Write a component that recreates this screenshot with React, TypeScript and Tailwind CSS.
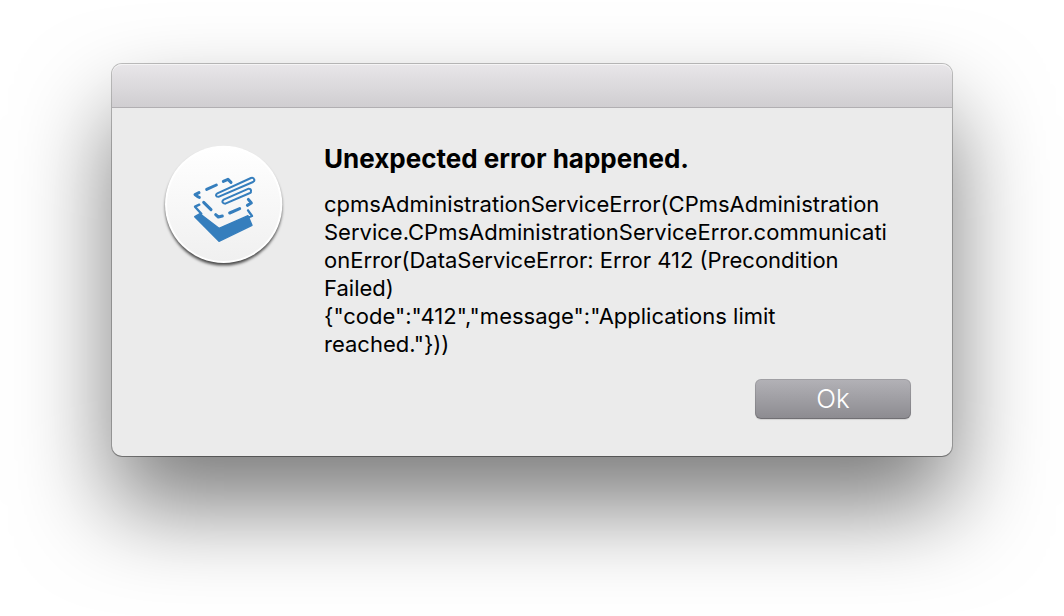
function AppIcon() {
  return (
    <svg viewBox="27 27 360 360" className="size-30 shrink-0 overflow-visible" role="img" aria-label="Application icon">
      <defs>
        <linearGradient id="disc" x1="0" y1="0" x2="0" y2="1">
          <stop offset="0" stopColor="#ffffff" />
          <stop offset="1" stopColor="#f0f0f0" />
        </linearGradient>
        <filter id="soft" x="-10%" y="-10%" width="120%" height="125%">
          <feGaussianBlur stdDeviation="5" />
        </filter>
      </defs>
      <circle cx="206" cy="213" r="175" fill="#000" fillOpacity="0.7" filter="url(#soft)" />
      <circle cx="206" cy="205" r="176" fill="#fff" />
      <circle cx="206" cy="205" r="170" fill="url(#disc)" />
      <g stroke="#357ebd" strokeLinecap="round" strokeLinejoin="round" fill="none">
        <path d="M119 242L135 233L192 277L279 239L291 268L192 316Z" fill="#357ebd" strokeWidth="4" />
        <path d="M133 206L120 212L139 233M279 223L291 240L275 246" strokeWidth="7" />
        <path d="M133 184L128 182L120 176L132 170M155 160L184 147M205 136L219 130L228 139M146 199L168 221M182 236L190 243L202 240M224 231L254 218M277 208L289 201L280 190" strokeWidth="9" />
        <path d="M187 172L288 126Q296 124 298 131Q299 135 294 138L192 182Q184 183 183 178Q183 174 187 172ZM206 191L281 158Q288 158 288 164Q289 169 285 171L211 203Q204 203 202 198Q202 194 206 191Z" strokeWidth="6" />
      </g>
    </svg>
  );
}

const detailLines = [
  "cpmsAdministrationServiceError(CPmsAdministration",
  "Service.CPmsAdministrationServiceError.communicati",
  "onError(DataServiceError: Error 412 (Precondition",
  "Failed)",
  '{"code":"412","message":"Applications limit',
  'reached."}))',
];

export default function App() {
  return (
    <main className="min-h-screen overflow-hidden bg-white px-28 py-16 font-['Inter',sans-serif] text-black">
      <section
        role="alertdialog"
        aria-labelledby="alert-title"
        aria-describedby="alert-detail"
        className="rounded-[10px] bg-[#ebebeb] shadow-[0_0_0_1px_rgba(0,0,0,0.24),0_1px_0_rgba(0,0,0,0.2),0_50px_94px_rgba(0,0,0,0.52)]"
      >
        <header className="h-11 rounded-t-[10px] border-b border-[#b1afb2] bg-linear-to-b from-[#e8e6e9] to-[#d0ced1] shadow-[inset_0_1px_0_#f5f4f5]" />
        <div className="flex gap-10 pt-[37px] pr-10 pl-[52px]">
          <AppIcon />
          <div className="min-w-0 flex-1">
            <h1 id="alert-title" className="text-[26px] leading-7 font-bold">Unexpected error happened.</h1>
            <p id="alert-detail" className="mt-[17px] text-[22px] leading-7 whitespace-nowrap">
              {detailLines.map((line) => (
                <span key={line} className="block">{line}</span>
              ))}
            </p>
          </div>
        </div>
        <div className="flex justify-end px-[41px] pt-[21px] pb-[37px]">
          <button type="button" className="h-10 w-39 rounded-md bg-linear-to-b from-[#b3b2b7] to-[#8c8b90] text-[26px] leading-10 font-light text-white shadow-[inset_0_0_0_1px_rgba(0,0,0,0.1),inset_0_-1px_0_rgba(0,0,0,0.1),0_1px_1px_rgba(0,0,0,0.1)]">
            Ok
          </button>
        </div>
      </section>
    </main>
  );
}
